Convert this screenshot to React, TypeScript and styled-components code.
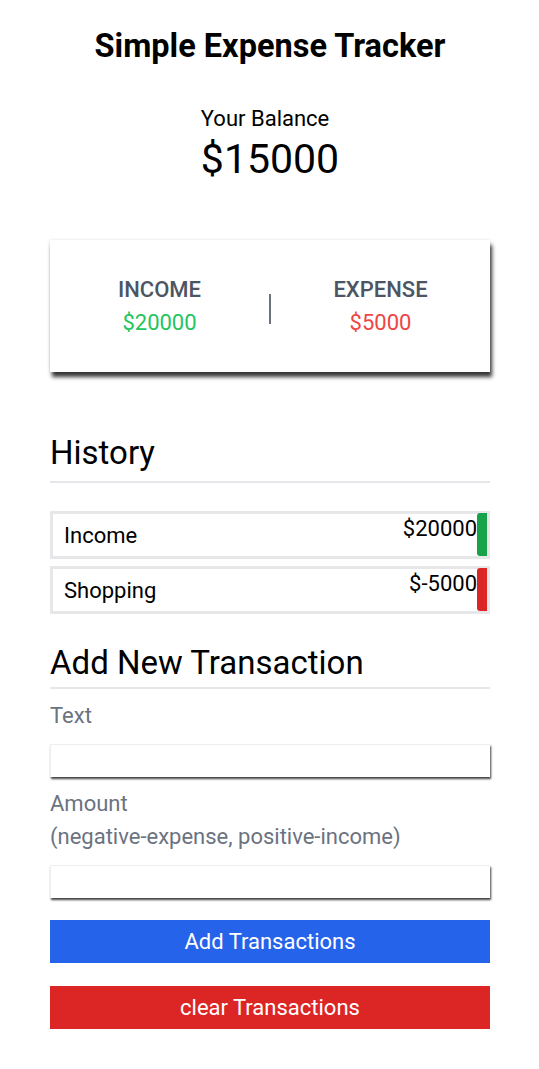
import React from "react";
import styled, { createGlobalStyle } from "styled-components";

const GlobalStyle = createGlobalStyle`
  * { box-sizing: border-box; }
  html, body { margin: 0; padding: 0; background: #ffffff; }
  body {
    font-family: Roboto, "Noto Sans", "Liberation Sans", sans-serif;
    font-size: 22px;
    line-height: 1.5;
    color: #000000;
  }
`;

const Page = styled.div`
  width: 440px;
  margin: 0 49px 0 50px;
  padding: 27px 0 40px;
  display: flex;
  flex-direction: column;
`;

const Title = styled.h1`
  margin: 0;
  font-size: 32.5px;
  line-height: 1.2;
  font-weight: 700;
  text-align: center;
`;

const BalanceBlock = styled.div`
  margin-top: 36px;
  align-self: center;
  display: flex;
  flex-direction: column;
  align-items: flex-start;
`;

const BalanceLabel = styled.div`
  font-size: 22px;
  line-height: 33px;
`;

const BalanceValue = styled.div`
  margin-top: 4px;
  font-size: 41px;
  line-height: 1;
`;

const Card = styled.div`
  margin-top: 60px;
  height: 132px;
  display: flex;
  align-items: center;
  background: #fff;
  box-shadow: 2px 5px 4px rgba(0, 0, 0, 0.78), 0 0 3px rgba(0, 0, 0, 0.12);
`;

const Stat = styled.div`
  flex: 1;
  display: flex;
  flex-direction: column;
  align-items: center;
`;

const StatLabel = styled.div`
  font-size: 22px;
  line-height: 33px;
  font-weight: 500;
  color: #4b5563;
`;

const StatValue = styled.div<{ $color: string }>`
  font-size: 22px;
  line-height: 33px;
  color: ${(p) => p.$color};
`;

const Divider = styled.div`
  width: 2px;
  height: 30px;
  background: #6b7280;
  margin-top: 6px;
`;

const SectionTitle = styled.h3<{ $top: number; $pad: number }>`
  margin: ${(p) => p.$top}px 0 0;
  font-size: 33px;
  line-height: 48px;
  font-weight: 400;
  padding-bottom: ${(p) => p.$pad}px;
  border-bottom: 2px solid #e5e7eb;
`;

const List = styled.ul`
  list-style: none;
  margin: 28px 0 0;
  padding: 0;
  display: flex;
  flex-direction: column;
  gap: 7px;
`;

const Item = styled.li`
  height: 48px;
  border: 3px solid #e7e7e9;
  display: flex;
  align-items: stretch;
  padding-left: 11px;
`;

const ItemText = styled.span`
  flex: 1;
  align-self: center;
  line-height: 33px;
`;

const ItemAmount = styled.span`
  align-self: flex-start;
  line-height: 30px;
`;

const ItemBar = styled.span<{ $color: string }>`
  width: 10px;
  margin-top: -1px;
  background: ${(p) => p.$color};
  border-radius: 3px 0 0 3px;
`;

const Form = styled.form`
  margin-top: 10px;
  display: flex;
  flex-direction: column;
`;

const Label = styled.label`
  color: #6b7280;
  font-size: 22px;
  line-height: 33px;
`;

const Input = styled.input`
  display: block;
  width: 100%;
  height: 33px;
  margin: 12px 0 10px;
  border: 1px solid #eeeeee;
  border-right: none;
  border-bottom: none;
  background: #fff;
  box-shadow: 1px 2px 2px rgba(0, 0, 0, 0.75);
  font: inherit;
  outline: none;
`;

const Button = styled.button<{ $bg: string; $top: number }>`
  display: block;
  width: 100%;
  height: 43px;
  margin-top: ${(p) => p.$top}px;
  border: none;
  background: ${(p) => p.$bg};
  color: #fff;
  font-family: inherit;
  font-size: 22px;
  line-height: 33px;
  cursor: pointer;
`;

export default function App() {
  return (
    <>
      <GlobalStyle />
      <Page>
        <Title>Simple Expense Tracker</Title>
        <BalanceBlock>
          <BalanceLabel>Your Balance</BalanceLabel>
          <BalanceValue>$15000</BalanceValue>
        </BalanceBlock>
        <Card>
          <Stat>
            <StatLabel>INCOME</StatLabel>
            <StatValue $color="#22c55e">$20000</StatValue>
          </Stat>
          <Divider />
          <Stat>
            <StatLabel>EXPENSE</StatLabel>
            <StatValue $color="#ef4444">$5000</StatValue>
          </Stat>
        </Card>
        <SectionTitle $top={57} $pad={4}>History</SectionTitle>
        <List>
          <Item>
            <ItemText>Income</ItemText>
            <ItemAmount>$20000</ItemAmount>
            <ItemBar $color="#16a34a" />
          </Item>
          <Item>
            <ItemText>Shopping</ItemText>
            <ItemAmount>$-5000</ItemAmount>
            <ItemBar $color="#dc2626" />
          </Item>
        </List>
        <SectionTitle $top={25} $pad={0}>Add New Transaction</SectionTitle>
        <Form onSubmit={(e) => e.preventDefault()}>
          <Label htmlFor="text">Text</Label>
          <Input id="text" type="text" />
          <Label htmlFor="amount">
            Amount
            <br />
            (negative-expense, positive-income)
          </Label>
          <Input id="amount" type="number" />
          <Button type="submit" $bg="#2563eb" $top={12}>
            Add Transactions
          </Button>
          <Button type="button" $bg="#dc2626" $top={23}>
            clear Transactions
          </Button>
        </Form>
      </Page>
    </>
  );
}
